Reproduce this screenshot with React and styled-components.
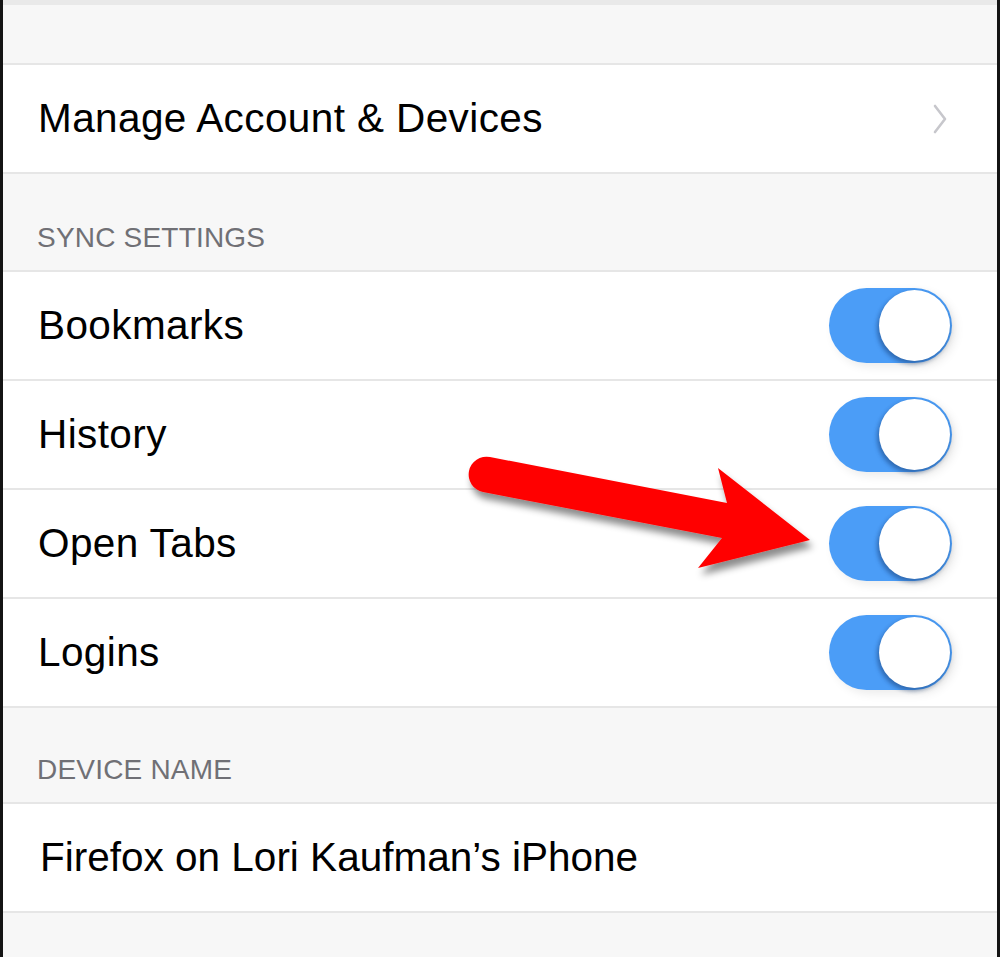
import React from 'react';
import styled, { createGlobalStyle } from 'styled-components';

const GlobalStyle = createGlobalStyle`
    html, body {
        margin: 0;
        padding: 0;
        background: #fff;
    }
    body {
        font-family: "Liberation Sans", Arial, sans-serif;
    }
`

const syncItems = ['Bookmarks', 'History', 'Open Tabs', 'Logins'];

function App() {
    return (
        <>
            <GlobalStyle />
            <Frame>
                <TopBand />
                <Spacer />
                <Row first last>
                    <Label>Manage Account &amp; Devices</Label>
                    <Chevron viewBox="0 0 14 30">
                        <path d="M2 2 L12 15 L2 28" />
                    </Chevron>
                </Row>
                <SectionHeader>SYNC SETTINGS</SectionHeader>
                {syncItems.map((item, i) => (
                    <Row key={item} first last={i === syncItems.length - 1}>
                        <Label>{item}</Label>
                        <Toggle>
                            <Knob />
                        </Toggle>
                    </Row>
                ))}
                <SectionHeader small>DEVICE NAME</SectionHeader>
                <Row first last>
                    <Label device>Firefox on Lori Kaufman’s iPhone</Label>
                </Row>
                <Filler />

                <Arrow viewBox="0 0 400 160">
                    <defs>
                        <filter id="arrowShadow" x="-10%" y="-20%" width="130%" height="160%">
                            <feDropShadow dx="3" dy="7" stdDeviation="3.5" floodColor="#000" floodOpacity="0.45" />
                        </filter>
                    </defs>
                    <path
                        d="M50 17 L287 63 L278 28 L370 100 L258 128 L282 98 L43 52 A17.8 17.8 0 0 1 50 17 Z"
                        fill="#ff0000"
                        filter="url(#arrowShadow)"
                    />
                </Arrow>
            </Frame>
        </>
    )
}

export default App

const Frame = styled.div`
    position: relative;
    width: 1000px;
    height: 957px;
    box-sizing: border-box;
    border-left: 3px solid #141414;
    border-right: 3px solid #141414;
    background: #f7f7f7;
    overflow: hidden;
    display: flex;
    flex-direction: column;
`

const TopBand = styled.div`
    height: 5px;
    background: #e9e9e9;
`

const Spacer = styled.div`
    height: 58px;
    background: #f7f7f7;
`

const Row = styled.div`
    height: 107px;
    display: flex;
    align-items: center;
    justify-content: space-between;
    padding: 0 45px 0 35px;
    background: #fff;
    border-top: ${props => props.first ? '2px solid #e6e6e6' : 'none'};
    border-bottom: ${props => props.last ? '2px solid #e6e6e6' : 'none'};
    flex-shrink: 0;
`

const Label = styled.span`
    font-size: 40.5px;
    color: #000;
    margin-left: ${props => props.device ? '2px' : '0'};
    letter-spacing: ${props => props.device ? '0' : '0.4px'};
`

const Chevron = styled.svg`
    width: 14px;
    height: 30px;
    margin-right: 5px;
    fill: none;
    stroke: #c7c7cc;
    stroke-width: 2.6;
    stroke-linecap: round;
    stroke-linejoin: round;
`

const SectionHeader = styled.div`
    height: ${props => props.small ? '94px' : '96px'};
    box-sizing: border-box;
    display: flex;
    align-items: flex-end;
    padding: 0 0 16px 34px;
    font-size: 28px;
    letter-spacing: 0.2px;
    color: #707075;
    background: #f7f7f7;
    flex-shrink: 0;
`

const Toggle = styled.div`
    position: relative;
    width: 123px;
    height: 75px;
    border-radius: 38px;
    background: #4b9df7;
    box-shadow: 4px 4px 10px rgba(0, 0, 0, 0.08);
`

const Knob = styled.div`
    position: absolute;
    top: 2px;
    right: 2px;
    width: 71px;
    height: 71px;
    border-radius: 50%;
    background: #fff;
    box-shadow: -2px 3px 4px rgba(20, 60, 120, 0.45), 1px 2px 6px rgba(0, 0, 0, 0.12);
`

const Filler = styled.div`
    flex: 1;
    background: #f7f7f7;
`

const Arrow = styled.svg`
    position: absolute;
    left: 437px;
    top: 440px;
    width: 400px;
    height: 160px;
    overflow: visible;
    pointer-events: none;
`
